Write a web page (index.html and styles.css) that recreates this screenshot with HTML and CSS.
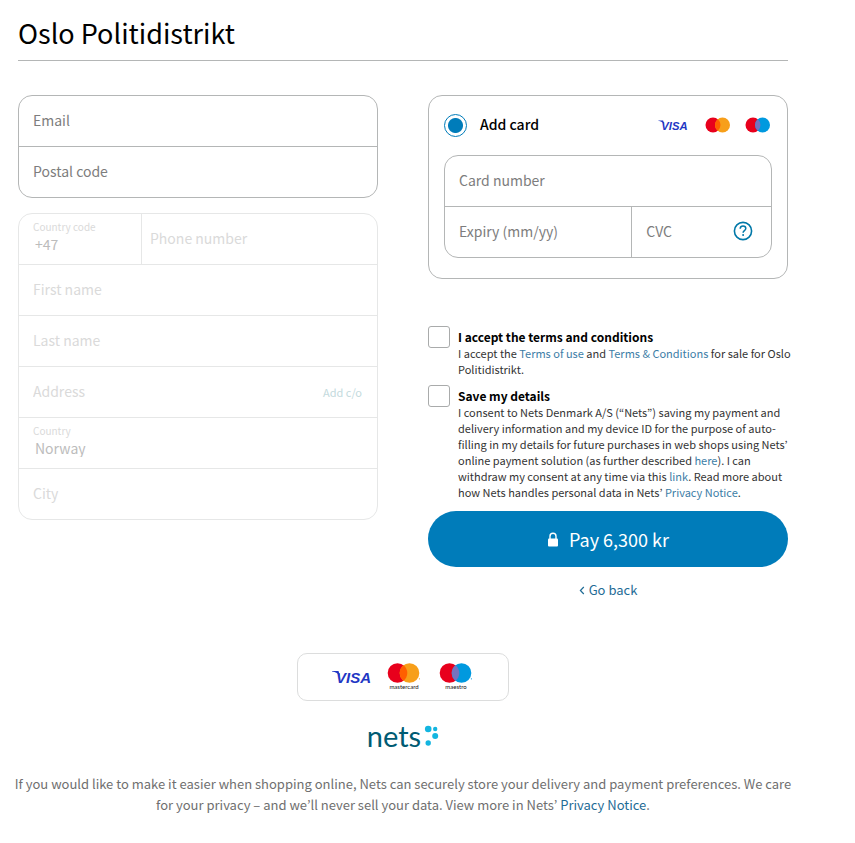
FILE: index.html
```html
<!DOCTYPE html>
<html lang="en">
<head>
<meta charset="utf-8">
<meta name="viewport" content="width=device-width, initial-scale=1">
<title>Oslo Politidistrikt</title>
<link rel="stylesheet" href="styles.css">
</head>
<body>
<div class="page">
  <header class="page-header"><h1>Oslo Politidistrikt</h1></header>

  <form class="checkout">
    <div class="column">
      <div class="field-group">
        <div class="row"><input class="field" type="email" placeholder="Email" aria-label="Email"></div>
        <div class="row"><input class="field" type="text" placeholder="Postal code" aria-label="Postal code"></div>
      </div>

      <div class="field-group is-disabled">
        <div class="row row-phone">
          <div class="labelled">
            <label for="country-code">Country code</label>
            <select id="country-code" disabled><option>+47</option></select>
          </div>
          <input class="field field-phone" type="tel" placeholder="Phone number" aria-label="Phone number" disabled>
        </div>
        <div class="row"><input class="field" type="text" placeholder="First name" aria-label="First name" disabled></div>
        <div class="row"><input class="field" type="text" placeholder="Last name" aria-label="Last name" disabled></div>
        <div class="row">
          <input class="field" type="text" placeholder="Address" aria-label="Address" disabled>
          <button class="add-co" type="button" disabled>Add c/o</button>
        </div>
        <div class="row">
          <div class="labelled">
            <label for="country">Country</label>
            <select id="country" disabled><option>Norway</option></select>
          </div>
        </div>
        <div class="row"><input class="field" type="text" placeholder="City" aria-label="City" disabled></div>
      </div>
    </div>

    <div class="column">
      <section class="card">
        <div class="card-head">
          <input class="radio" type="radio" id="add-card" name="method" checked>
          <label for="add-card">Add card</label>
          <div class="brands">
            <svg class="visa" width="29" height="12" viewBox="0 0 38 16">
              <path d="M0 2h6.5l1.6 5C6.5 4.600 3.500 2.900 0 2.400z"/>
              <text x="4" y="14">VISA</text>
            </svg>
            <svg width="26" height="16" viewBox="0 0 26 16" aria-hidden="true">
              <circle cx="8" cy="8" r="7.5" fill="#e8001c"/><circle cx="17.5" cy="8" r="7.5" fill="#f79f1a"/>
              <path d="M12.75 2.2a7.5 7.5 0 0 1 0 11.6a7.5 7.5 0 0 1 0-11.6z" fill="#ff5f00"/>
            </svg>
            <svg width="26" height="16" viewBox="0 0 26 16" aria-hidden="true">
              <circle cx="8" cy="8" r="7.5" fill="#e8001c"/><circle cx="17.5" cy="8" r="7.5" fill="#0099df"/>
              <path d="M12.75 2.2a7.5 7.5 0 0 1 0 11.6a7.5 7.5 0 0 1 0-11.6z" fill="#7673c0"/>
            </svg>
          </div>
        </div>
        <div class="field-group">
          <div class="row"><input class="field" type="text" placeholder="Card number" aria-label="Card number"></div>
          <div class="row row-card">
            <input class="field" type="text" placeholder="Expiry (mm/yy)" aria-label="Expiry (mm/yy)">
            <div class="cvc">
              <input class="field" type="text" placeholder="CVC" aria-label="CVC">
              <button class="help" type="button" aria-label="CVC">
                <svg width="20" height="20" viewBox="0 0 20 20" fill="none" stroke="#0078a8" aria-hidden="true">
                  <circle cx="10" cy="10" r="8.6" stroke-width="1.6"/>
                  <path d="M7.2 7.7C7.3 6 8.4 5.1 10 5.1s2.8 1 2.8 2.500c0 2-2.700 2.100-2.700 4.100" stroke-width="1.5"/>
                  <circle cx="10.1" cy="14" r="1" fill="#0078a8" stroke="none"/>
                </svg>
              </button>
            </div>
          </div>
        </div>
      </section>

      <div class="consents">
        <div class="consent">
          <input class="checkbox" type="checkbox" id="terms">
          <div class="consent-text">
            <label for="terms">I accept the terms and conditions</label>
            <p>I accept the <a href="#">Terms of use</a> and <a href="#">Terms &amp; Conditions</a> for sale for Oslo Politidistrikt.</p>
          </div>
        </div>
        <div class="consent">
          <input class="checkbox" type="checkbox" id="save">
          <div class="consent-text">
            <label for="save">Save my details</label>
            <p>I consent to Nets Denmark A/S (“Nets”) saving my payment and delivery information and my device ID for the purpose of auto-filling in my details for future purchases in web shops using Nets’ online payment solution (as further described <a href="#">here</a>). I can withdraw my consent at any time via this <a href="#">link</a>. Read more about how Nets handles personal data in Nets’ <a href="#">Privacy Notice</a>.</p>
          </div>
        </div>
      </div>

      <button class="pay" type="submit">
        <svg width="12" height="18" viewBox="0 0 12 18" aria-hidden="true">
          <path d="M3 9V6.200a3 3 0 0 1 6 0V9" fill="none" stroke="#fff" stroke-width="1.4"/>
          <rect x="1" y="8.400" width="10" height="8" rx="1" fill="#fff"/>
        </svg>
        <span>Pay 6,300 kr</span>
      </button>
      <a class="back" href="#">
        <svg width="6" height="10" viewBox="0 0 6 10" fill="none" stroke="#1f6c96" stroke-width="1.2" aria-hidden="true"><path d="M4.800 2L1.400 5.500l3.400 3.500"/></svg>
        <span>Go back</span>
      </a>
    </div>
  </form>

  <footer class="page-footer">
    <div class="brand-box">
      <svg class="visa" width="38" height="16" viewBox="0 0 38 16">
        <path d="M0 2h6.500l1.600 5C6.500 4.600 3.500 2.900 0 2.400z"/>
        <text x="4" y="14">VISA</text>
      </svg>
      <div class="brand">
        <svg width="34" height="20" viewBox="0 0 34 20" aria-hidden="true">
          <circle cx="10.500" cy="10" r="9.800" fill="#e8001c"/><circle cx="22.500" cy="10" r="9.800" fill="#f79f1a"/>
          <path d="M16.500 2.250a9.800 9.800 0 0 1 0 15.500a9.800 9.800 0 0 1 0-15.500z" fill="#ff5f00"/>
          <circle cx="32.400" cy="15.800" r=".6" fill="#f79f1a"/>
        </svg>
        <span>mastercard</span>
      </div>
      <div class="brand">
        <svg width="34" height="20" viewBox="0 0 34 20" aria-hidden="true">
          <circle cx="10.500" cy="10" r="9.800" fill="#e8001c"/><circle cx="22.500" cy="10" r="9.800" fill="#0099df"/>
          <path d="M16.500 2.250a9.800 9.800 0 0 1 0 15.500a9.800 9.800 0 0 1 0-15.500z" fill="#7673c0"/>
          <circle cx="32.400" cy="15.800" r=".6" fill="#0099df"/>
        </svg>
        <span>maestro</span>
      </div>
    </div>
    <div class="nets">
      <span>nets</span>
      <svg width="15" height="22" viewBox="0 0 15 22" fill="#13b5e0" aria-hidden="true">
        <circle cx="4.200" cy="4" r="3.300"/><circle cx="11.200" cy="4" r="2.200"/>
        <circle cx="11.200" cy="11" r="3"/><circle cx="4.200" cy="18" r="2.700"/>
      </svg>
    </div>
    <p class="note">If you would like to make it easier when shopping online, Nets can securely store your delivery and payment preferences. We care for your privacy – and we’ll never sell your data. View more in Nets’ <a href="#">Privacy Notice</a>.</p>
  </footer>
</div>
</body>
</html>
```
FILE: styles.css
```css
* { box-sizing: border-box; }

body {
  margin: 0;
  background: #fff;
  color: #000;
  font-family: "Noto Sans CJK KR", "Noto Sans", sans-serif;
  font-size: 14px;
}

h1, p { margin: 0; font-weight: 400; }
a { color: #1f6c96; text-decoration: none; }
button, input, select { font-family: inherit; color: inherit; }
button { border: 0; padding: 0; background: none; }

.page { max-width: 806px; padding: 13px 18px 28px; }

.page-header { border-bottom: 1px solid #b4b6b6; padding-bottom: 7px; }
h1 { font-size: 27px; line-height: 40px; }

.checkout {
  display: grid;
  grid-template-columns: 1fr 1fr;
  gap: 50px;
  margin-top: 34px;
}
.column { display: flex; flex-direction: column; min-width: 0; }

.field-group { border: 1px solid #b4b6b6; border-radius: 14px; overflow: hidden; }
.field-group + .field-group { margin-top: 15px; }
.row { display: flex; align-items: stretch; height: 51px; border-bottom: 1px solid #b4b6b6; }
.row:last-child { height: 50px; border-bottom: 0; }

.field {
  flex: 1;
  width: 100%;
  min-width: 0;
  border: 0;
  outline: 0;
  padding: 0 14px 2px;
  background: transparent;
  font-size: 14px;
}
.field::placeholder { color: #7d7d7d; opacity: 1; }

.is-disabled, .is-disabled .row { border-color: #e6e7e7; }
.is-disabled .field::placeholder { color: #dadada; }
.row-phone .labelled { flex: 0 0 123px; border-right: 1px solid #e6e7e7; }
.field-phone { padding-left: 8px; }
.labelled { flex: 1; display: flex; flex-direction: column; padding: 5px 14px 0; }
.labelled label { color: #dadada; font-size: 10px; line-height: 16px; }
.labelled select {
  appearance: none;
  border: 0;
  padding: 0 2px;
  background: none;
  color: #bcbcbc;
  font-size: 14px;
  line-height: 18px;
  height: 18px;
  opacity: 1;
}
.add-co { padding: 0 15px; color: #c3dadd; font-size: 11px; }

.card { border: 1px solid #b4b6b6; border-radius: 14px; padding: 15px 15px 20px; }
.card-head { display: flex; align-items: center; height: 28px; margin-bottom: 16px; }
.card-head label { margin-left: 13px; font-size: 14px; font-weight: 500; line-height: 28px; padding-bottom: 2px; }
.radio {
  appearance: none;
  width: 23px;
  height: 23px;
  margin: 0;
  border: 1px solid #007cba;
  border-radius: 50%;
  background: radial-gradient(circle, #007cba 0 7px, #fff 8px);
}
.brands { display: flex; align-items: center; gap: 14px; margin-left: auto; padding-right: 1px; }
.brands .visa { margin-right: 4px; }
.visa {
  fill: #1f37c4;
  font-family: "Liberation Sans", Arial, sans-serif;
  font-size: 15px;
  font-style: italic;
  font-weight: 700;
  overflow: visible;
}

.row-card { display: grid; grid-template-columns: 4fr 3fr; }
.cvc { display: flex; align-items: stretch; border-left: 1px solid #b4b6b6; }
.help { display: flex; align-items: center; flex: none; margin-right: 18px; padding-bottom: 2px; }

.consents { display: flex; flex-direction: column; gap: 7px; margin: 47px -4px 0 0; }
.consent { display: flex; gap: 8px; }
.checkbox {
  appearance: none;
  flex: none;
  width: 22px;
  height: 22px;
  margin: 0;
  border: 1px solid #a9abab;
  border-radius: 3px;
}
.consent-text { padding: 3px 0 1px; font-size: 11px; line-height: 16px; color: #333; }
.consent-text label { display: block; color: #000; font-size: 12px; font-weight: 700; }
.consent-text a { color: #3c7da6; }

.pay {
  display: flex;
  align-items: center;
  justify-content: center;
  gap: 10px;
  height: 56px;
  margin-top: 10px;
  border-radius: 28px;
  background: #007cba;
  color: #fff;
  font-size: 18px;
}
.back {
  display: flex;
  align-items: center;
  justify-content: center;
  gap: 4px;
  margin-top: 13px;
  font-size: 13px;
  line-height: 20px;
}

.page-footer { display: flex; flex-direction: column; align-items: center; margin-top: 53px; }
.brand-box {
  display: flex;
  align-items: center;
  justify-content: center;
  gap: 16px;
  width: 212px;
  height: 48px;
  border: 1px solid #dcdddd;
  border-radius: 10px;
}
.brand { display: flex; flex-direction: column; align-items: center; width: 36px; }
.brand span { font-family: Lato, sans-serif; font-size: 6px; line-height: 8px; color: #111; }
.nets {
  display: flex;
  align-items: center;
  gap: 3px;
  margin-top: 20px;
  color: #005b73;
  font-family: Lato, sans-serif;
  font-size: 29px;
  line-height: 30px;
}
.note {
  margin: 22px -8px 0;
  color: #6f6f6f;
  font-size: 13px;
  line-height: 21px;
  text-align: center;
}
```
